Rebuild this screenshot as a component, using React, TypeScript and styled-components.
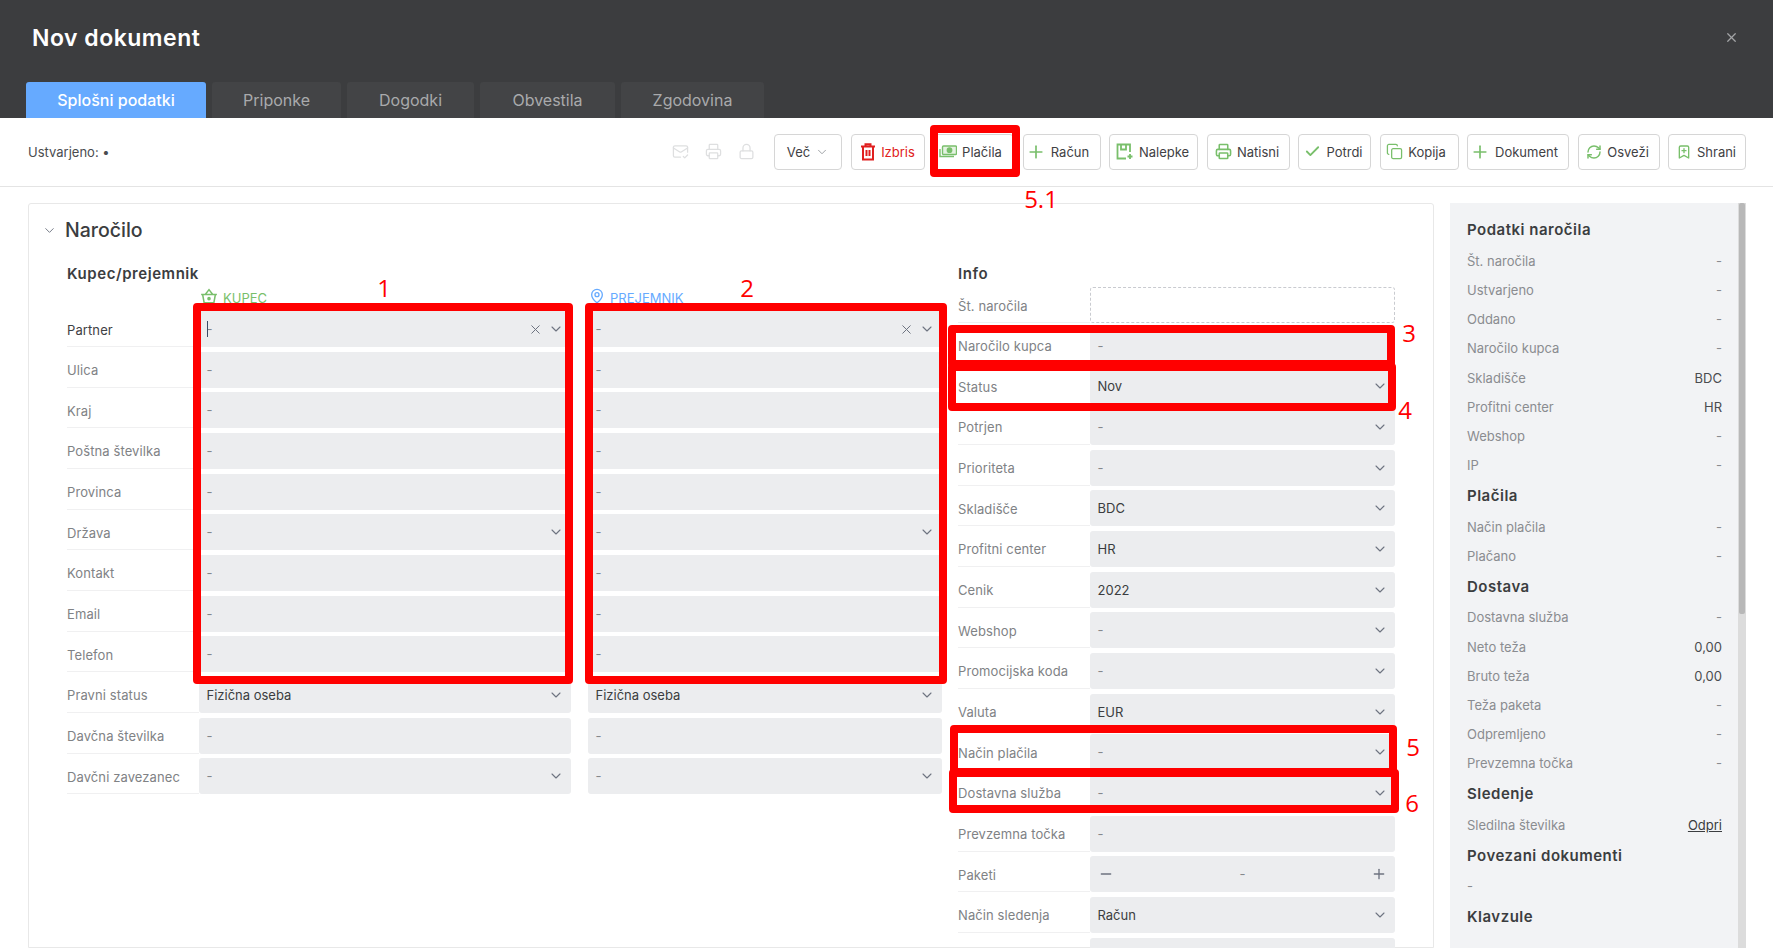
import React from "react";
import styled, { createGlobalStyle } from "styled-components";
import { BookmarkPlus, Check, ChevronDown, Copy, Lock, MailCheck, MapPin, Minus, Plus, Printer, RefreshCw, X } from "lucide-react";

const Global = createGlobalStyle`
  html, body { margin: 0; padding: 0; background: #fff; }
  body { font-family: Inter, "Liberation Sans", sans-serif; font-size: 13px; color: #3b3d40; }
  * { box-sizing: border-box; }
`;

const Page = styled.div`
  position: relative;
  width: 1773px;
  height: 948px;
  overflow: hidden;
  display: flex;
  flex-direction: column;
`;
const Header = styled.header`
  background: #3c3d3f;
  height: 118px;
  flex: none;
  display: flex;
  flex-direction: column;
  padding-left: 26px;
`;
const TitleBar = styled.div`
  height: 82px;
  display: flex;
  align-items: center;
  justify-content: space-between;
  padding: 0 34px 7px 6px;
  color: #fff;
`;
const Title = styled.h1`
  margin: 0;
  font-size: 23px;
  font-weight: 600;
  letter-spacing: 0.5px;
`;
const CloseButton = styled.span`
  display: flex;
  color: #a3a4a6;
`;
const Tabs = styled.nav`
  display: flex;
  gap: 6px;
`;
const Tab = styled.div<{ $active?: boolean; $w: number }>`
  width: ${(p) => p.$w}px;
  height: 36px;
  display: flex;
  align-items: center;
  justify-content: center;
  border-radius: 3px 3px 0 0;
  font-size: 16px;
  background: ${(p) => (p.$active ? "#66aaff" : "#434446")};
  color: ${(p) => (p.$active ? "#fff" : "#a9aaac")};
  font-weight: ${(p) => (p.$active ? 500 : 400)};
`;
const Toolbar = styled.div`
  height: 69px;
  flex: none;
  display: flex;
  align-items: center;
  padding: 0 27px 1px 28px;
  border-bottom: 1px solid #e4e4e4;
`;
const Created = styled.span`
  font-size: 13px;
  color: #4a4c4f;
  margin-right: auto;
`;
const GhostIcons = styled.div`
  display: flex;
  align-items: center;
  gap: 16px;
  margin-right: 19px;
  color: #dedfe0;
`;
const Actions = styled.div`
  display: flex;
  gap: 8.5px;
`;
const ActionButton = styled.div<{ $w: number; $danger?: boolean; $pr?: number }>`
  width: ${(p) => p.$w}px;
  height: 36px;
  display: flex;
  align-items: center;
  justify-content: center;
  gap: 5px;
  padding-right: ${(p) => p.$pr ?? 0}px;
  border: 1px solid #d6d6d6;
  border-radius: 4px;
  background: #fff;
  font-size: 13px;
  color: ${(p) => (p.$danger ? "#e02020" : "#3f4144")};
  svg { flex: none; color: ${(p) => (p.$danger ? "#e02020" : "#79bf6b")}; }
`;
const MoreChevron = styled.span`
  display: flex;
  svg { color: #8b8e93; }
`;
const Body = styled.main`
  flex: 1;
  min-height: 0;
  display: flex;
  padding: 16px 28px 0;
`;
const Card = styled.section`
  width: 1406px;
  flex: none;
  border: 1px solid #e8e8e8;
  border-radius: 3px 3px 0 0;
  padding-top: 12px;
`;
const CardHead = styled.div`
  height: 28px;
  display: flex;
  align-items: center;
  gap: 8px;
  padding-left: 13px;
  color: #6d7380;
`;
const CardTitle = styled.h2`
  margin: 0;
  font-size: 19.5px;
  font-weight: 500;
  color: #3b3d40;
`;
const Columns = styled.div`
  display: flex;
  gap: 16px;
  margin: 19px 0 0 38px;
`;
const Section = styled.div<{ $w: number }>`
  width: ${(p) => p.$w}px;
  flex: none;
`;
const SectionTitle = styled.h3`
  margin: 0 0 2px;
  height: 22px;
  line-height: 22px;
  font-size: 15px;
  font-weight: 600;
  letter-spacing: 0.55px;
  color: #3b3d40;
`;
const PartyHead = styled.div`
  display: grid;
  grid-template-columns: 132px 372px 17px 354px;
  height: 24px;
`;
const Party = styled.div<{ $tone: string; $col: number }>`
  grid-column: ${(p) => p.$col};
  display: flex;
  align-items: flex-start;
  gap: 5px;
  padding: 1px 0 0 1px;
  font-size: 13px;
  line-height: 20px;
  color: ${(p) => p.$tone};
`;
const Rows = styled.div`
  display: flex;
  flex-direction: column;
  gap: 4.67px;
`;
const PartyRow = styled.div`
  display: grid;
  grid-template-columns: 132px 372px 17px 354px;
`;
const InfoRow = styled.div`
  display: grid;
  grid-template-columns: 132px 305px;
`;
const Label = styled.div<{ $strong?: boolean }>`
  height: 36px;
  display: flex;
  align-items: center;
  padding-top: 2px;
  border-bottom: 1px solid #f0f0f1;
  font-size: 13px;
  letter-spacing: 0.1px;
  color: ${(p) => (p.$strong ? "#3f4144" : "#808285")};
`;
const Field = styled.div<{ $col?: number; $dashed?: boolean; $filled?: boolean }>`
  position: relative;
  grid-column: ${(p) => p.$col ?? "auto"};
  height: 36px;
  display: flex;
  align-items: center;
  justify-content: space-between;
  padding: 0 7px 0 7.5px;
  border-radius: 3px;
  font-size: 13px;
  background: ${(p) => (p.$dashed ? "#fff" : "#ecedef")};
  border: ${(p) => (p.$dashed ? "1px dashed #c9cbd0" : "none")};
  color: ${(p) => (p.$filled ? "#3b3d40" : "#85888c")};
`;
const FieldIcons = styled.span`
  display: flex;
  align-items: center;
  gap: 5px;
  color: #6d7380;
`;
const Caret = styled.span`
  position: absolute;
  left: 7.5px;
  top: 10px;
  width: 1px;
  height: 16px;
  background: #3b4a66;
`;
const Stepper = styled(Field)`
  padding: 0 8px;
  color: #85888c;
  svg { color: #6d7380; }
`;
const Side = styled.aside`
  margin-left: 16px;
  width: 296px;
  flex: none;
  display: flex;
  background: #f2f3f5;
`;
const SideContent = styled.div`
  flex: 1;
  padding: 11px 16px 0 17px;
`;
const SideTitle = styled.h4`
  margin: 0;
  height: 32.3px;
  display: flex;
  align-items: center;
  padding-bottom: 1px;
  font-size: 15px;
  font-weight: 600;
  letter-spacing: 0.5px;
  color: #3b3d40;
`;
const SideRow = styled.div`
  height: 29.2px;
  display: flex;
  align-items: center;
  justify-content: space-between;
  font-size: 13px;
  color: #8a8c90;
`;
const SideValue = styled.span<{ $dark?: boolean }>`
  color: ${(p) => (p.$dark ? "#4a4c4f" : "#8a8c90")};
`;
const SideLink = styled.a`
  color: #3b3d40;
  text-decoration: underline;
`;
const Scrollbar = styled.div`
  width: 8px;
  flex: none;
  background: #dcdcdc;
  padding: 0 1px;
`;
const Thumb = styled.div`
  height: 411px;
  background: #b8b8b8;
  border-radius: 2px;
`;
const Mark = styled.div<{ $x: number; $y: number; $w: number; $h: number }>`
  position: absolute;
  left: ${(p) => p.$x}px;
  top: ${(p) => p.$y}px;
  width: ${(p) => p.$w}px;
  height: ${(p) => p.$h}px;
  border: 8px solid #ff0000;
  border-radius: 4px;
  pointer-events: none;
`;
const Note = styled.span<{ $x: number; $y: number }>`
  position: absolute;
  left: ${(p) => p.$x}px;
  top: ${(p) => p.$y}px;
  transform: translate(-50%, -50%);
  font-family: "Open Sans", sans-serif;
  font-size: 24px;
  line-height: 1;
  color: #ff0000;
`;

const Chevron = () => <ChevronDown size={16} strokeWidth={1.6} color="#6d7380" />;

const Basket = () => (
  <svg width="18" height="16" viewBox="0 0 24 21" fill="none" stroke="#79bf6b" strokeWidth="2">
    <path d="M1.5 8.5h21M3.5 8.5l2 11h13l2-11M7 8.5 12 2l5 6.5" />
    <circle cx="12" cy="14" r="1.4" fill="#79bf6b" />
  </svg>
);
const Trash = () => (
  <svg width="16" height="18" viewBox="0 0 16 18" fill="none" stroke="currentColor" strokeWidth="2">
    <path d="M1 3.5h14M5.5 3V1.2h5V3M3 3.5v13h10v-13M6.5 7v6M9.5 7v6" />
  </svg>
);
const Money = () => (
  <svg width="18" height="14" viewBox="0 0 18 14" fill="none" stroke="currentColor" strokeWidth="1.4">
    <rect x="3.5" y="1" width="14" height="8.5" rx="1" fill="currentColor" fillOpacity=".2" />
    <circle cx="10.5" cy="5.2" r="2.2" fill="currentColor" />
    <path d="M1 4v7.5h14" />
  </svg>
);
const Sticker = () => (
  <svg width="18" height="17" viewBox="0 0 18 17" fill="none" stroke="currentColor" strokeWidth="1.8">
    <path d="M10 15.5H1.5V1.5H14V9" />
    <path d="M5 1.5v5h5v-5" />
    <path d="M14 11v5M11.5 13.5h5" />
  </svg>
);

const partyRows: { label: string; a: string; select?: boolean }[] = [
  { label: "Ulica", a: "-" },
  { label: "Kraj", a: "-" },
  { label: "Poštna številka", a: "-" },
  { label: "Provinca", a: "-" },
  { label: "Država", a: "-", select: true },
  { label: "Kontakt", a: "-" },
  { label: "Email", a: "-" },
  { label: "Telefon", a: "-" },
  { label: "Pravni status", a: "Fizična oseba", select: true },
  { label: "Davčna številka", a: "-" },
  { label: "Davčni zavezanec", a: "-", select: true },
];

const infoBefore = [
  ["Status", "Nov"],
  ["Potrjen", "-"],
  ["Prioriteta", "-"],
  ["Skladišče", "BDC"],
  ["Profitni center", "HR"],
  ["Cenik", "2022"],
  ["Webshop", "-"],
  ["Promocijska koda", "-"],
  ["Valuta", "EUR"],
  ["Način plačila", "-"],
  ["Dostavna služba", "-"],
];

type SideItem = { t: string } | { l: string; v: string; dark?: boolean };
const sideItems: SideItem[] = [
  { t: "Podatki naročila" },
  { l: "Št. naročila", v: "-" },
  { l: "Ustvarjeno", v: "-" },
  { l: "Oddano", v: "-" },
  { l: "Naročilo kupca", v: "-" },
  { l: "Skladišče", v: "BDC", dark: true },
  { l: "Profitni center", v: "HR", dark: true },
  { l: "Webshop", v: "-" },
  { l: "IP", v: "-" },
  { t: "Plačila" },
  { l: "Način plačila", v: "-" },
  { l: "Plačano", v: "-" },
  { t: "Dostava" },
  { l: "Dostavna služba", v: "-" },
  { l: "Neto teža", v: "0,00", dark: true },
  { l: "Bruto teža", v: "0,00", dark: true },
  { l: "Teža paketa", v: "-" },
  { l: "Odpremljeno", v: "-" },
  { l: "Prevzemna točka", v: "-" },
];

const SelectField = ({ value, col, clear }: { value: string; col?: number; clear?: boolean }) => (
  <Field $col={col} $filled={value !== "-"}>
    {value}
    <FieldIcons>
      {clear && <X size={15} strokeWidth={1.6} />}
      <Chevron />
    </FieldIcons>
  </Field>
);

export default function App() {
  return (
    <Page>
      <Global />
      <Header>
        <TitleBar>
          <Title>Nov dokument</Title>
          <CloseButton><X size={15} strokeWidth={2} /></CloseButton>
        </TitleBar>
        <Tabs>
          <Tab $active $w={180}>Splošni podatki</Tab>
          <Tab $w={129}>Priponke</Tab>
          <Tab $w={127}>Dogodki</Tab>
          <Tab $w={135}>Obvestila</Tab>
          <Tab $w={143}>Zgodovina</Tab>
        </Tabs>
      </Header>
      <Toolbar>
        <Created>Ustvarjeno: •</Created>
        <GhostIcons>
          <MailCheck size={17} strokeWidth={1.8} />
          <Printer size={17} strokeWidth={1.8} />
          <Lock size={17} strokeWidth={1.8} />
        </GhostIcons>
        <Actions>
          <ActionButton $w={68}>Več <MoreChevron><ChevronDown size={14} strokeWidth={1.4} /></MoreChevron></ActionButton>
          <ActionButton $w={74} $danger><Trash />Izbris</ActionButton>
          <ActionButton $w={81} $pr={6}><Money />Plačila</ActionButton>
          <ActionButton $w={78} $pr={8}><Plus size={20} strokeWidth={2} />Račun</ActionButton>
          <ActionButton $w={89} $pr={2}><Sticker />Nalepke</ActionButton>
          <ActionButton $w={83} $pr={2}><Printer size={17} strokeWidth={2.2} />Natisni</ActionButton>
          <ActionButton $w={73} $pr={2}><Check size={17} strokeWidth={2.6} />Potrdi</ActionButton>
          <ActionButton $w={79} $pr={6}><Copy size={17} strokeWidth={1.8} />Kopija</ActionButton>
          <ActionButton $w={102} $pr={8}><Plus size={20} strokeWidth={2} />Dokument</ActionButton>
          <ActionButton $w={82} $pr={2}><RefreshCw size={16} strokeWidth={2.2} />Osveži</ActionButton>
          <ActionButton $w={78} $pr={2}><BookmarkPlus size={16} strokeWidth={2} />Shrani</ActionButton>
        </Actions>
      </Toolbar>
      <Body>
        <Card>
          <CardHead>
            <ChevronDown size={15} strokeWidth={1.5} />
            <CardTitle>Naročilo</CardTitle>
          </CardHead>
          <Columns>
            <Section $w={875}>
              <SectionTitle>Kupec/prejemnik</SectionTitle>
              <PartyHead>
                <Party $col={2} $tone="#79bf6b"><Basket />KUPEC</Party>
                <Party $col={4} $tone="#66aaff"><MapPin size={16} strokeWidth={2} />PREJEMNIK</Party>
              </PartyHead>
              <Rows>
                <PartyRow>
                  <Label $strong>Partner</Label>
                  <Field $col={2}>
                    <Caret />-
                    <FieldIcons><X size={15} strokeWidth={1.6} /><Chevron /></FieldIcons>
                  </Field>
                  <SelectField col={4} value="-" clear />
                </PartyRow>
                {partyRows.map((r) => (
                  <PartyRow key={r.label}>
                    <Label>{r.label}</Label>
                    {r.select ? (
                      <>
                        <SelectField col={2} value={r.a} />
                        <SelectField col={4} value={r.a} />
                      </>
                    ) : (
                      <>
                        <Field $col={2}>{r.a}</Field>
                        <Field $col={4}>{r.a}</Field>
                      </>
                    )}
                  </PartyRow>
                ))}
              </Rows>
            </Section>
            <Section $w={437}>
              <SectionTitle>Info</SectionTitle>
              <Rows>
                <InfoRow>
                  <Label>Št. naročila</Label>
                  <Field $dashed />
                </InfoRow>
                <InfoRow>
                  <Label>Naročilo kupca</Label>
                  <Field>-</Field>
                </InfoRow>
                {infoBefore.map(([l, v]) => (
                  <InfoRow key={l}>
                    <Label>{l}</Label>
                    <SelectField value={v} />
                  </InfoRow>
                ))}
                <InfoRow>
                  <Label>Prevzemna točka</Label>
                  <Field>-</Field>
                </InfoRow>
                <InfoRow>
                  <Label>Paketi</Label>
                  <Stepper>
                    <Minus size={16} strokeWidth={2} />-<Plus size={16} strokeWidth={2} />
                  </Stepper>
                </InfoRow>
                <InfoRow>
                  <Label>Način sledenja</Label>
                  <SelectField value="Račun" />
                </InfoRow>
                <InfoRow>
                  <Label />
                  <Field />
                </InfoRow>
              </Rows>
            </Section>
          </Columns>
        </Card>
        <Side>
          <SideContent>
            {sideItems.map((it) =>
              "t" in it ? (
                <SideTitle key={it.t}>{it.t}</SideTitle>
              ) : (
                <SideRow key={it.l}>
                  {it.l}
                  <SideValue $dark={it.dark}>{it.v}</SideValue>
                </SideRow>
              )
            )}
            <SideTitle>Sledenje</SideTitle>
            <SideRow>Sledilna številka<SideLink>Odpri</SideLink></SideRow>
            <SideTitle>Povezani dokumenti</SideTitle>
            <SideRow>-</SideRow>
            <SideTitle>Klavzule</SideTitle>
            <SideRow>-</SideRow>
          </SideContent>
          <Scrollbar><Thumb /></Scrollbar>
        </Side>
      </Body>

      <Mark $x={930} $y={125} $w={90} $h={52} />
      <Mark $x={193} $y={303} $w={380} $h={381} />
      <Mark $x={585} $y={303} $w={362} $h={381} />
      <Mark $x={948} $y={325} $w={447} $h={43} />
      <Mark $x={948} $y={363} $w={448} $h={48} />
      <Mark $x={950} $y={725} $w={447} $h={51} />
      <Mark $x={949} $y={769} $w={450} $h={44} />
      <Note $x={1041} $y={199}>5.1</Note>
      <Note $x={384} $y={288}>1</Note>
      <Note $x={747} $y={288}>2</Note>
      <Note $x={1409} $y={333}>3</Note>
      <Note $x={1405} $y={410}>4</Note>
      <Note $x={1413} $y={747}>5</Note>
      <Note $x={1412} $y={803}>6</Note>
    </Page>
  );
}
